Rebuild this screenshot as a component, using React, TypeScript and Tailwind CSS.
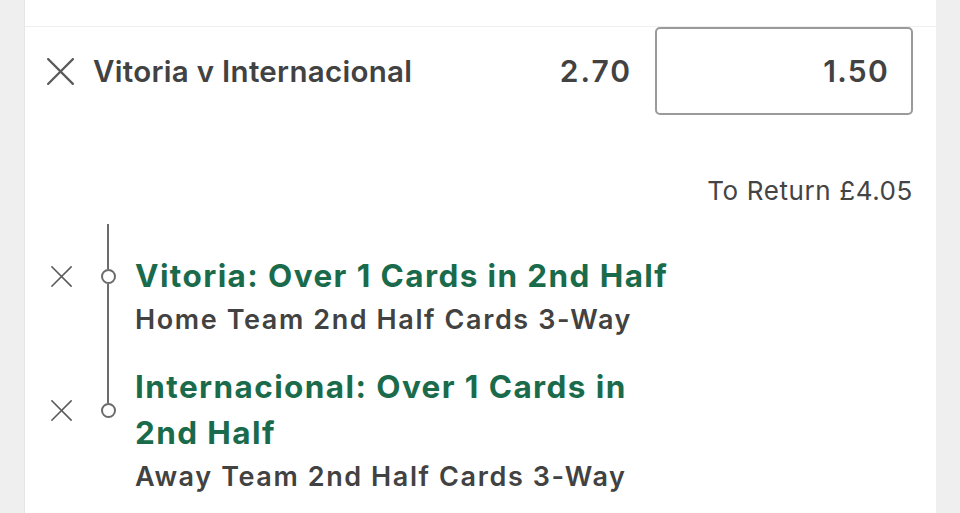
import React from "react";

const font = { fontFamily: "Inter, 'Noto Sans', 'Liberation Sans', sans-serif" };

function Cross({ size, stroke = 2 }: { size: number; stroke?: number }) {
    return (
        <svg width={size} height={size} viewBox="0 0 24 24" fill="none">
            <path
                d="M1 1 L23 23 M23 1 L1 23"
                stroke="#5a5a5a"
                strokeWidth={stroke}
                strokeLinecap="square"
            />
        </svg>
    );
}

interface Leg {
    title: string;
    market: string;
}

const legs: Leg[] = [
    { title: "Vitoria: Over 1 Cards in 2nd Half", market: "Home Team 2nd Half Cards 3-Way" },
    { title: "Internacional: Over 1 Cards in 2nd Half", market: "Away Team 2nd Half Cards 3-Way" },
];

function LegRow({ leg, last }: { leg: Leg; last: boolean }) {
    return (
        <div className="flex flex-col">
            {/* selection title */}
            <div className="flex items-stretch">
                <div className="w-[50px] flex items-center justify-center">
                    <Cross size={21} stroke={1.8} />
                </div>
                <div className="w-[22px] ml-[11px] flex flex-col items-center">
                    <div className="flex-1 w-[2px] bg-[#6b6b6b]" />
                    <div className="w-[15px] h-[15px] rounded-full border-2 border-[#6b6b6b] bg-white" />
                    <div className={`flex-1 w-[2px] ${last ? "bg-transparent" : "bg-[#6b6b6b]"}`} />
                </div>
                <p className="ml-[16px] max-w-[545px] text-[31.5px] leading-[46px] font-bold text-[#1a6b4b] tracking-[1.4px]">
                    {leg.title}
                </p>
            </div>
            {/* market name */}
            <div className="flex items-stretch">
                <div className="w-[50px]" />
                <div className="w-[22px] ml-[11px] flex justify-center">
                    <div className={`w-[2px] ${last ? "bg-transparent" : "bg-[#6b6b6b]"}`} />
                </div>
                <p
                    className={`ml-[16px] text-[27px] leading-[42px] font-semibold text-[#424242] tracking-[1.6px] ${
                        last ? "" : "pb-[23px]"
                    }`}
                >
                    {leg.market}
                </p>
            </div>
        </div>
    );
}

export default function App() {
    return (
        <div className="w-[960px] h-[513px] overflow-hidden bg-[#efefef] px-[24px]" style={font}>
            <div className="h-full bg-white border-l border-[#e6e6e6]">
                <div className="h-[27px] border-b border-[#efefef]" />

                {/* main bet row */}
                <div className="flex items-center pl-[22px] pr-[23px]">
                    <Cross size={27} />
                    <span className="ml-[19px] text-[29.5px] font-semibold text-[#424242] tracking-[0.3px]">
                        Vitoria v Internacional
                    </span>
                    <span className="ml-auto text-[30px] font-semibold text-[#424242] tracking-[2px]">
                        2.70
                    </span>
                    <div className="ml-[23px] w-[258px] h-[88px] rounded-[5px] border-2 border-[#9a9a9a] flex items-center justify-end pr-[22px]">
                        <span className="text-[30px] font-semibold text-[#424242] tracking-[1.3px]">1.50</span>
                    </div>
                </div>

                <div className="flex justify-end pr-[23px] mt-[58px]">
                    <span className="text-[26px] leading-[36px] text-[#444] tracking-[0.6px]">
                        To Return £4.05
                    </span>
                </div>

                {/* legs */}
                <div className="mt-[15px] pl-[11px] flex flex-col">
                    <div className="flex h-[29px]">
                        <div className="w-[50px]" />
                        <div className="w-[22px] ml-[11px] flex justify-center">
                            <div className="w-[2px] bg-[#6b6b6b]" />
                        </div>
                    </div>
                    {legs.map((leg, i) => (
                        <LegRow key={i} leg={leg} last={i === legs.length - 1} />
                    ))}
                </div>
            </div>
        </div>
    );
}
